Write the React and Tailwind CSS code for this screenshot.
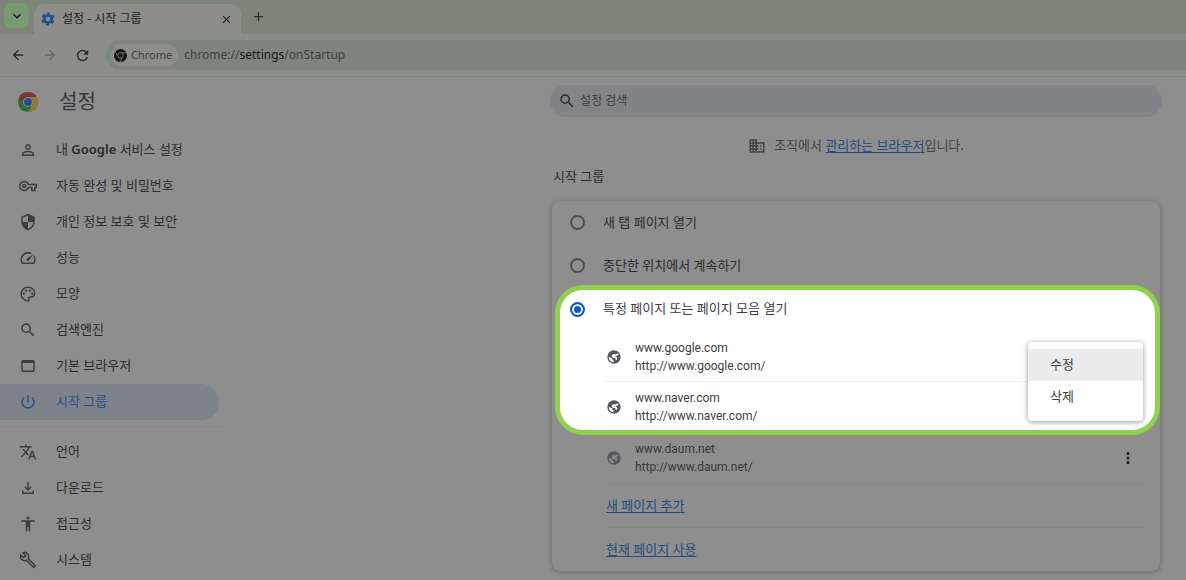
import React, { useState } from "react";
import {
  MdPersonOutline, MdOutlineVpnKey, MdSecurity, MdOutlineSpeed, MdOutlinePalette,
  MdSearch, MdOutlineWebAsset, MdPowerSettingsNew, MdTranslate, MdOutlineFileDownload,
  MdAccessibility, MdOutlineBuild, MdDomain, MdClose, MdAdd,
  MdArrowBack, MdArrowForward, MdRefresh, MdMoreVert, MdExpandMore,
} from "react-icons/md";
import { SiGooglechrome } from "react-icons/si";

const mainNav = [
  { icon: MdPersonOutline, label: <>내 <b className="font-semibold">Google</b> 서비스 설정</> },
  { icon: MdOutlineVpnKey, label: "자동 완성 및 비밀번호" },
  { icon: MdSecurity, label: "개인 정보 보호 및 보안" },
  { icon: MdOutlineSpeed, label: "성능" },
  { icon: MdOutlinePalette, label: "모양" },
  { icon: MdSearch, label: "검색엔진" },
  { icon: MdOutlineWebAsset, label: "기본 브라우저" },
  { icon: MdPowerSettingsNew, label: "시작 그룹", active: true },
];

const moreNav = [
  { icon: MdTranslate, label: "언어" },
  { icon: MdOutlineFileDownload, label: "다운로드" },
  { icon: MdAccessibility, label: "접근성" },
  { icon: MdOutlineBuild, label: "시스템" },
];

function ChromeLogo() {
  return (
    <svg viewBox="0 0 48 48" className="size-[22px]" aria-hidden="true">
      <circle cx="24" cy="24" r="22" fill="#2c6e3c" />
      <path d="M24 13H43A22 22 0 0 1 24 46L33.5 29.500A11 11 0 0 0 24 13Z" fill="#93792b" />
      <path d="M4.950 13A22 22 0 0 1 43.050 13H24A11 11 0 0 0 14.500 29.500Z" fill="#86332d" />
      <circle cx="24" cy="24" r="11" fill="#8e8e8e" />
      <circle cx="24" cy="24" r="8.500" fill="#244f8c" />
    </svg>
  );
}

function GearIcon() {
  return (
    <svg viewBox="0 0 24 24" className="size-4 text-[#204f95]" fill="none" stroke="currentColor" aria-hidden="true">
      <circle cx="12" cy="12" r="5.500" strokeWidth="4" />
      <circle cx="12" cy="12" r="8.500" strokeWidth="3" strokeDasharray="4.900 4" strokeDashoffset="2.450" transform="rotate(-90 12 12)" />
    </svg>
  );
}

function GlobeIcon({ className }) {
  return (
    <svg viewBox="0 0 24 24" className={`mt-2.5 size-4 shrink-0 ${className}`} aria-hidden="true">
      <circle cx="12" cy="12" r="10" fill="#54575c" />
      <path d="M18.500 8.500C16 7 16 10.500 12.500 9.200C9.500 8.500 9 12 12 12.200C15.500 12.200 16.200 13.500 15 16" fill="none" stroke="currentColor" strokeWidth="2.600" />
      <path d="M4.200 12L9.500 13.800V16L11.500 17.500V19.800A8 8 0 0 1 4.200 12Z" fill="currentColor" />
    </svg>
  );
}

function NavList({ items }) {
  return (
    <ul>
      {items.map(({ icon: Icon, label, active }, i) => (
        <li key={i}>
          <a
            href="#"
            className={
              active
                ? "flex h-9 items-center gap-[19px] rounded-r-full bg-[#7e828b] pl-[19px] text-[#2a4f82]"
                : "flex h-9 items-center gap-[19px] pl-[19px] text-[#2b2c2e]"
            }
          >
            <Icon className={active ? "size-[18px]" : "size-[18px] text-[#3b3d40]"} />
            <span>{label}</span>
          </a>
        </li>
      ))}
    </ul>
  );
}

function RadioRow({ label, value, selected, onSelect, className }) {
  return (
    <label className={`flex items-center gap-[18px] ${className}`}>
      <input
        type="radio"
        name="startup"
        checked={selected === value}
        onChange={() => onSelect(value)}
        className="size-[15px] appearance-none rounded-full border-2 border-[#4d4e50] checked:border-[#0b57d0] checked:bg-[#0b57d0] checked:shadow-[inset_0_0_0_2px_white]"
      />
      <span>{label}</span>
    </label>
  );
}

function Site({ name, url, className, globe = "text-white" }) {
  return (
    <div className={`flex items-start ${className}`}>
      <GlobeIcon className={globe} />
      <div className="ml-[13px] flex-1 font-['Roboto',sans-serif] text-xs leading-[18px]">
        <p>{name}</p>
        <p>{url}</p>
      </div>
    </div>
  );
}

export default function App() {
  const [selected, setSelected] = useState("specific");
  return (
    <div className="min-h-screen bg-[#8e8e8e] font-['Noto_Sans','Noto_Sans_CJK_KR',sans-serif] text-[13px] text-[#2b2c2e]">
      <header>
        <div className="flex h-[34px] items-end bg-[#7c8578]">
          <button aria-label="탭 검색" className="mb-1.5 ml-1 flex size-[25px] items-center justify-center rounded-lg bg-[#779a70] text-[#151a14]">
            <MdExpandMore className="size-4" />
          </button>
          <div className="ml-[5px] flex h-[30px] w-[207px] items-center rounded-t-[10px] bg-[#8c8e87] pr-2 pl-1.5 text-xs text-[#1f201f]">
            <GearIcon />
            <span className="ml-1.5 flex-1">설정 - 시작 그룹</span>
            <button aria-label="탭 닫기"><MdClose className="size-[13px]" /></button>
          </div>
          <button aria-label="새 탭" className="mb-2.5 ml-2.5 text-[#2a2d2a]"><MdAdd className="size-[15px]" /></button>
        </div>
        <div className="flex h-[43px] items-center border-b border-[#858681] bg-[#8c8e87] text-[#262826]">
          <button aria-label="뒤로" className="ml-2.5"><MdArrowBack className="size-4" /></button>
          <button aria-label="앞으로" className="ml-4 text-[#626460]"><MdArrowForward className="size-4" /></button>
          <button aria-label="새로고침" className="ml-4"><MdRefresh className="size-[17px]" /></button>
          <div className="ml-[15px] flex h-[30px] flex-1 items-center rounded-l-full bg-[#7e847e] pl-[5px] text-xs text-[#3d403d]">
            <span className="flex h-[22px] items-center gap-1 rounded-full bg-[#8c8e87] pr-1.5 pl-[3px] text-[11px]">
              <SiGooglechrome className="size-[13px] text-[#151615]" />
              Chrome
            </span>
            <span className="ml-1.5">chrome://<span className="text-[#151615]">settings</span>/onStartup</span>
          </div>
        </div>
      </header>

      <div className="flex items-start">
        <aside className="w-[222px] shrink-0">
          <div className="flex h-[55px] items-center gap-5 pb-1.5 pl-[17px]">
            <ChromeLogo />
            <h1 className="text-xl text-[#35373a]">설정</h1>
          </div>
          <nav aria-label="설정">
            <div className="mr-[3px]"><NavList items={mainNav} /></div>
            <hr className="mt-1.5 mb-[7px] border-[#888888]" />
            <NavList items={moreNav} />
          </nav>
        </aside>

        <main className="mr-6 ml-auto w-full max-w-[612px] pt-2">
          <label className="flex h-8 items-center gap-1 rounded-full bg-[#838488] pl-2">
            <MdSearch className="size-[18px] text-[#2b2c2e]" />
            <input type="search" aria-label="설정 검색" placeholder="설정 검색" className="min-w-0 flex-1 bg-transparent text-xs outline-none placeholder:text-[#3e4042]" />
          </label>
          <p className="mt-[18px] flex h-[22px] items-center justify-center gap-2 text-[#414345]">
            <MdDomain className="size-[18px]" />
            <span>조직에서 <a href="#" className="text-[#234d80] underline underline-offset-2">관리하는 브라우저</a>입니다.</span>
          </p>
          <h2 className="mt-2.5 h-[34px] pl-[3px]">시작 그룹</h2>

          <section className="mx-0.5 rounded-lg bg-[#8e8e8e] shadow-[0_1px_4px_1px_rgba(0,0,0,0.2)]">
            <RadioRow label="새 탭 페이지 열기" value="newtab" selected={selected} onSelect={setSelected} className="h-[43px] pl-[18px]" />
            <RadioRow label="중단한 위치에서 계속하기" value="continue" selected={selected} onSelect={setSelected} className="h-[43px] pl-[18px]" />

            <div className="relative -mt-0.5 ml-[3px] rounded-[28px] border-5 border-[#92d050] bg-white text-[#3c3e41]">
              <RadioRow label="특정 페이지 또는 페이지 모음 열기" value="specific" selected={selected} onSelect={setSelected} className="h-[38px] pl-2.5" />
              <div className="mr-3 pt-1 pl-[46px]">
                <Site name="www.google.com" url="http://www.google.com/" className="h-[50px] border-b border-[#ededed] pt-[7px]" />
                <Site name="www.naver.com" url="http://www.naver.com/" className="h-12 pt-[7px]" />
              </div>
              <div role="menu" className="absolute top-[52px] right-3 w-[115px] rounded bg-white pt-[7px] pb-2 shadow-[0_1px_4px_1px_rgba(0,0,0,0.3)]">
                <button role="menuitem" className="flex h-8 w-full items-center bg-[#ececec] pl-[22px]">수정</button>
                <button role="menuitem" className="flex h-8 w-full items-center pl-[22px]">삭제</button>
              </div>
            </div>

            <div className="mr-[17px] ml-[54px]">
              <div className="flex h-[50px] items-start border-b border-[#888888]">
                <Site name="www.daum.net" url="http://www.daum.net/" globe="text-[#8e8e8e]" className="flex-1 pt-[5px] text-[#36383a]" />
                <button aria-label="추가 작업" className="mt-3.5 mr-1.5 text-[#1b1c1d]"><MdMoreVert className="size-[18px]" /></button>
              </div>
              <div className="flex h-[43px] items-center border-b border-[#888888]">
                <a href="#" className="text-[#234d80] underline underline-offset-2">새 페이지 추가</a>
              </div>
              <div className="flex h-[43px] items-center">
                <a href="#" className="text-[#234d80] underline underline-offset-2">현재 페이지 사용</a>
              </div>
            </div>
          </section>
        </main>
      </div>
    </div>
  );
}
